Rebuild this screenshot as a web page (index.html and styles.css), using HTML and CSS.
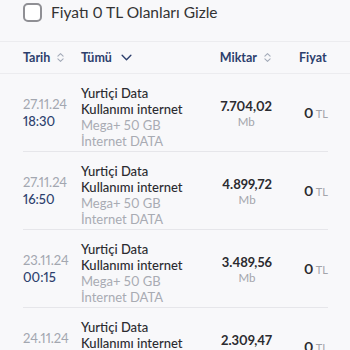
FILE: index.html
```html
<!DOCTYPE html>
<html lang="tr">
<head>
<meta charset="utf-8">
<link rel="stylesheet" href="styles.css">
</head>
<body>
<div class="filter">
  <span class="checkbox"></span>
  <span class="filter-label">Fiyatı 0 TL Olanları Gizle</span>
</div>
<div class="thead">
  <div class="grid">
    <div class="th">Tarih <svg class="sort" viewBox="0 0 8 12" width="7" height="11"><path d="M1 4.5 4 1.5 7 4.5M1 7.5 4 10.5 7 7.5" fill="none" stroke="#a3aab8" stroke-width="1.2" stroke-linecap="round" stroke-linejoin="round"/></svg></div>
    <div class="th th-type">Tümü <svg class="chev" viewBox="0 0 12 8" width="11" height="7"><path d="M1 1.5 6 6.5 11 1.5" fill="none" stroke="#2d3f6d" stroke-width="1.6" stroke-linecap="round" stroke-linejoin="round"/></svg></div>
    <div class="th th-amount">Miktar <svg class="sort" viewBox="0 0 8 12" width="7" height="11"><path d="M1 4.5 4 1.5 7 4.5M1 7.5 4 10.5 7 7.5" fill="none" stroke="#a3aab8" stroke-width="1.2" stroke-linecap="round" stroke-linejoin="round"/></svg></div>
    <div class="th th-price">Fiyat <svg class="sort" viewBox="0 0 8 12" width="7" height="11"><path d="M1 4.5 4 1.5 7 4.5M1 7.5 4 10.5 7 7.5" fill="none" stroke="#a3aab8" stroke-width="1.2" stroke-linecap="round" stroke-linejoin="round"/></svg></div>
  </div>
</div>
<div class="rows">
  <div class="row grid">
    <div class="date"><span class="d">27.11.24</span><span class="t">18:30</span></div>
    <div class="desc"><span class="main">Yurtiçi Data<br>Kullanımı internet</span><span class="sub">Mega+ 50 GB<br>İnternet DATA</span></div>
    <div class="amount"><span class="val">7.704,02</span><span class="unit">Mb</span></div>
    <div class="price"><b>0</b> TL</div>
  </div>
  <div class="row grid">
    <div class="date"><span class="d">27.11.24</span><span class="t">16:50</span></div>
    <div class="desc"><span class="main">Yurtiçi Data<br>Kullanımı internet</span><span class="sub">Mega+ 50 GB<br>İnternet DATA</span></div>
    <div class="amount"><span class="val">4.899,72</span><span class="unit">Mb</span></div>
    <div class="price"><b>0</b> TL</div>
  </div>
  <div class="row grid">
    <div class="date"><span class="d">23.11.24</span><span class="t">00:15</span></div>
    <div class="desc"><span class="main">Yurtiçi Data<br>Kullanımı internet</span><span class="sub">Mega+ 50 GB<br>İnternet DATA</span></div>
    <div class="amount"><span class="val">3.489,56</span><span class="unit">Mb</span></div>
    <div class="price"><b>0</b> TL</div>
  </div>
  <div class="row grid">
    <div class="date"><span class="d">24.11.24</span><span class="t">00:10</span></div>
    <div class="desc"><span class="main">Yurtiçi Data<br>Kullanımı internet</span><span class="sub">Mega+ 50 GB<br>İnternet DATA</span></div>
    <div class="amount"><span class="val">2.309,47</span><span class="unit">Mb</span></div>
    <div class="price"><b>0</b> TL</div>
  </div>
</div>
</body>
</html>
```
FILE: styles.css
```css
* { box-sizing: border-box; }
html, body { margin: 0; padding: 0; }
body {
  width: 350px;
  height: 350px;
  overflow: hidden;
  background: #f8f8fa;
  font-family: Lato, "Noto Sans", sans-serif;
  font-variant-numeric: proportional-nums;
  color: #2e2e33;
}
.filter {
  display: flex;
  align-items: flex-start;
  gap: 9px;
  padding: 3px 0 0 23px;
  height: 41px;
}
.checkbox {
  width: 19px;
  height: 19px;
  border: 2px solid #8f8f94;
  border-radius: 5px;
  background: #fff;
  flex: none;
}
.filter-label {
  font-size: 15.5px;
  line-height: 19px;
  color: #333;
}
.thead {
  border-top: 1px solid #ececef;
  border-bottom: 1px solid #ececef;
  height: 33px;
}
.grid {
  display: grid;
  grid-template-columns: 58px 1fr 82px 56px;
  margin: 0 22px 0 23px;
}
.thead .grid { height: 31px; align-items: center; }
.th {
  font-size: 12.5px;
  font-weight: 700;
  color: #2d3f6d;
  display: flex;
  align-items: center;
  white-space: nowrap;
}
.th .sort { margin-left: 7px; }
.th-type .chev { margin-left: 9px; }
.th-amount { justify-content: flex-end; margin-right: 1px; }
.th-price { padding-left: 27px; }
.row {
  border-bottom: 1px solid #e6e6ea;
  padding: 11px 0 3px;
  height: 78px;
  align-items: start;
}
.date {
  display: flex;
  flex-direction: column;
  font-size: 13px;
  line-height: 17px;
  margin-top: 11px;
}
.date .d { color: #a3a7b0; }
.date .t { color: #2d3f6d; font-weight: 500; }
.desc {
  display: flex;
  flex-direction: column;
  font-size: 13px;
  line-height: 16px;
  white-space: nowrap;
}
.desc .main { color: #2b2b30; font-weight: 500; }
.desc .sub { color: #a8abb3; }
.amount {
  display: flex;
  flex-direction: column;
  align-items: center;
  justify-self: end;
  line-height: 16px;
  margin-top: 13px;
}
.amount .val { font-size: 13px; font-weight: 700; color: #2b2b30; }
.amount .unit { font-size: 11.5px; color: #a3a5ab; }
.price {
  padding-left: 32px;
  margin-top: 20px;
  line-height: 16px;
  font-size: 11px;
  color: #a3a5ab;
  white-space: nowrap;
}
.price b { font-size: 14px; color: #2b2b30; font-weight: 700; }
```
